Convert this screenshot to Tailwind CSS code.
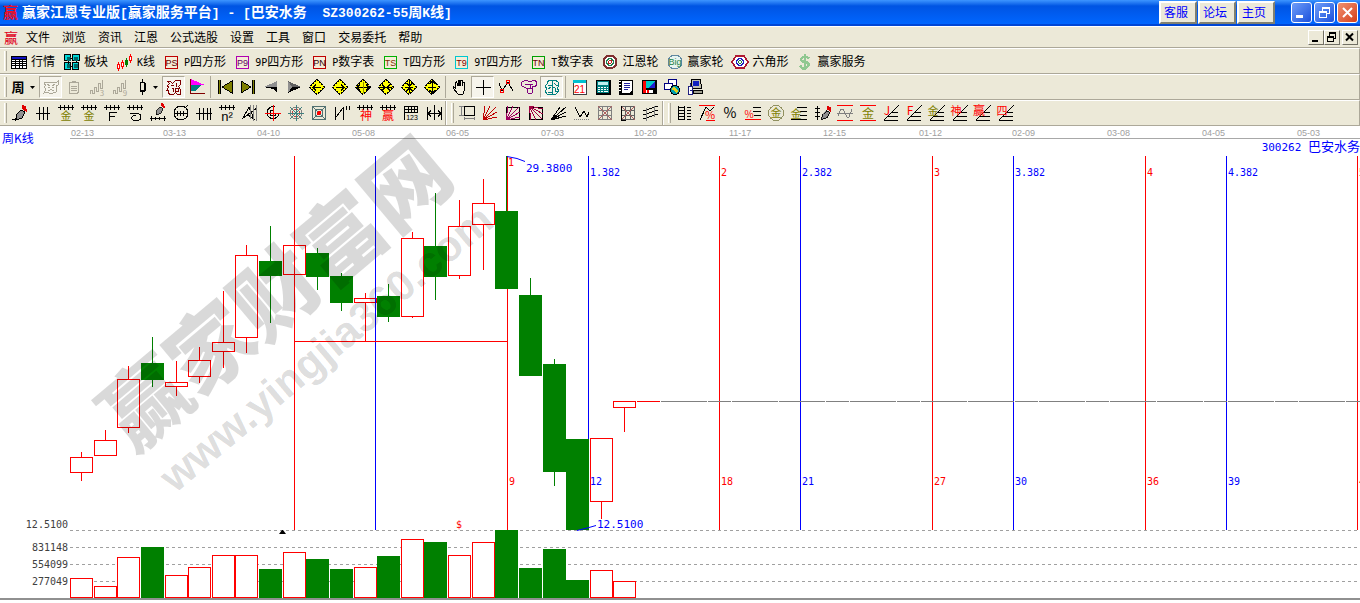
<!DOCTYPE html>
<html lang="zh-CN">
<head>
  <meta charset="UTF-8" />
  <meta name="viewport" content="width=device-width, initial-scale=1.0"/>
  <title>赢家江恩专业版</title>
  <script src="https://cdn.jsdelivr.net/npm/@tailwindcss/browser@4"></script>
</head>

<body class="bg-white font-['Noto_Sans_CJK_SC',sans-serif] text-xs text-black">

  <!-- Title bar -->
  <header class="flex h-[26px] items-center bg-linear-to-b from-[#3d95ff] via-[#0054e3] via-25% to-[#0066ff] border-b-2 border-[#0046d5] pl-[3px] pr-[2px]">
    <span class="w-4 text-[15px] leading-6 font-bold text-[#e8102a]">赢</span>
    <h1 class="ml-[3px] grow whitespace-pre text-sm leading-6 font-bold text-white">赢家江恩专业版<span class="font-['Liberation_Mono',monospace] text-[13px]">[</span>赢家服务平台<span class="font-['Liberation_Mono',monospace] text-[13px]">] - [</span>巴安水务<span class="font-['Liberation_Mono',monospace] text-[13px]">  SZ300262-55</span>周<span class="font-['Liberation_Mono',monospace] text-[13px]">K</span>线<span class="font-['Liberation_Mono',monospace] text-[13px]">]</span></h1>
    <nav class="mr-4 flex gap-px text-[#0000ff]">
      <a href="#" class="h-[23px] w-[38px] border-2 border-t-white border-l-white border-r-[#808070] border-b-[#808070] bg-[#ece9d8] pl-[3px] leading-[17px]">客服</a>
      <a href="#" class="h-[23px] w-[38px] border-2 border-t-white border-l-white border-r-[#808070] border-b-[#808070] bg-[#ece9d8] pl-[3px] leading-[17px]">论坛</a>
      <a href="#" class="h-[23px] w-[38px] border-2 border-t-white border-l-white border-r-[#808070] border-b-[#808070] bg-[#ece9d8] pl-[3px] leading-[17px]">主页</a>
    </nav>
    <div class="flex gap-[2px]">
      <button aria-label="最小化" class="h-[21px] w-[21px] rounded-[3px] border border-white bg-linear-to-br from-[#6f9cf8] to-[#1c4fdc]"><svg class="h-[19px] w-[19px]" viewBox="0 0 19 19"><path d="M4 12h7v3H4z" fill="#fff"/></svg></button>
      <button aria-label="还原" class="h-[21px] w-[21px] rounded-[3px] border border-white bg-linear-to-br from-[#6f9cf8] to-[#1c4fdc]"><svg class="h-[19px] w-[19px]" viewBox="0 0 19 19" shape-rendering="crispEdges"><path d="M4.500 8.500h7v6h-7zM7.500 8V4.500h7v6H12M4 9.500h8M7 5.500h8" fill="none" stroke="#fff"/></svg></button>
      <button aria-label="关闭" class="h-[21px] w-[21px] rounded-[3px] border border-white bg-linear-to-br from-[#f0906e] to-[#d43c14]"><svg class="h-[19px] w-[19px]" viewBox="0 0 19 19"><path d="M5 5l9 9M14 5l-9 9" stroke="#fff" stroke-width="2"/></svg></button>
    </div>
  </header>

  <!-- Menu bar -->
  <div class="flex h-[22px] items-center border-t border-b border-t-white border-b-[#aca899] bg-[#ece9d8] pr-[2px]">
    <span class="ml-1 w-4 text-sm leading-5 text-[#e00020]">赢</span>
    <nav id="menu" class="flex grow"></nav>
    <div class="flex">
      <button aria-label="最小化窗口" class="h-[15px] w-4 border border-t-white border-l-white border-r-[#716f64] border-b-[#716f64]"><svg class="h-[13px] w-[14px]" viewBox="0 0 14 13"><path d="M3 9h6v2H3z"/></svg></button>
      <button aria-label="还原窗口" class="h-[15px] w-4 border border-t-white border-l-white border-r-[#716f64] border-b-[#716f64]"><svg class="h-[13px] w-[14px]" viewBox="0 0 14 13" shape-rendering="crispEdges"><path d="M2.500 6.500h6v4h-6zM2 5.500h7M4.500 5V2.500h6v5H9M4 1.500h7" fill="none" stroke="#000"/></svg></button>
      <button aria-label="关闭窗口" class="ml-[2px] h-[15px] w-4 border border-t-white border-l-white border-r-[#716f64] border-b-[#716f64]"><svg class="h-[13px] w-[14px]" viewBox="0 0 14 13"><path d="M3 2.500l7 7M10 2.500l-7 7" stroke="#000" stroke-width="2"/></svg></button>
    </div>
  </div>

  <!-- Toolbars -->
  <div class="flex h-[26px] items-center border-t border-r border-b border-t-white border-r-[#aca899] border-b-[#aca899] bg-[#ece9d8] pl-1">
    <i class="mr-1 h-5 w-[3px] border-l border-r border-l-white border-r-[#aca899]"></i>
    <div id="views" class="flex gap-[9px]"></div>
  </div>
  <div class="flex h-[26px] items-center border-t border-r border-b border-t-white border-r-[#aca899] border-b-[#aca899] bg-[#ece9d8] pl-1">
    <i class="mr-px h-5 w-[3px] border-l border-r border-l-white border-r-[#aca899]"></i>
    <div id="controls" class="flex items-center"></div>
  </div>
  <div id="drawing" class="flex h-[26px] items-stretch border-t border-r border-b border-t-white border-r-[#aca899] border-b-[#aca899] bg-[#ece9d8]"></div>

  <!-- Chart -->
  <main>
    <svg id="chart" class="w-full" viewBox="0 126 1360 477" role="img" aria-label="巴安水务 周K线"></svg>
  </main>

  <script>
    // ===== helpers =====
    const line = (d, c = '#000', w = 1) => `<path d="${d}" fill="none" stroke="${c}" stroke-width="${w}"/>`;
    const fill = (d, c = '#000') => `<path d="${d}" fill="${c}"/>`;
    const circle = (x, y, r, c, f = 'none', w = 1) => `<circle cx="${x}" cy="${y}" r="${r}" stroke="${c}" stroke-width="${w}" fill="${f}"/>`;
    const glyph = (t, x, y, s, c) => `<text x="${x}" y="${y}" font-size="${s}" fill="${c}" text-anchor="middle">${t}</text>`;
    const icon = (body) => `<svg class="h-4 w-4 shrink-0 overflow-visible" viewBox="0 0 16 16" shape-rendering="crispEdges">${body}</svg>`;

    // ===== menu =====
    document.getElementById('menu').innerHTML =
      ['文件', '浏览', '资讯', '江恩', '公式选股', '设置', '工具', '窗口', '交易委托', '帮助']
        .map(t => `<button class="px-[6px] leading-5">${t}</button>`).join('');

    // ===== first toolbar =====
    const boxed = (t, c, tc) => `<rect x="1.500" y="2.500" width="12" height="12" fill="#f4ecd8" stroke="${c}"/>`
      + `<text x="7.500" y="12" font-size="9" fill="${tc}" text-anchor="middle" font-family="Liberation Sans">${t}</text>`;
    const candleMini = (x, y, c, f) => line(`M${x + 0.5} ${y - 2}v9`, c) + `<rect x="${x - 0.5}" y="${y + 0.5}" width="2" height="4" fill="${f}" stroke="${c}"/>`;
    const views = [
      ['', '行情', fill('M0 2h16v13H0z', '#000') + fill('M1 3h14v2H1z', '#1010c0') + fill('M1 6h3v1H1zM5 6h3v1H5zM9 6h2v1H9zM12 6h3v1h-3zM1 8h3v1H1zM5 8h3v1H5zM9 8h2v1H9zM12 8h3v1h-3zM1 10h3v1H1zM5 10h3v1H5zM9 10h2v1H9zM12 10h3v1h-3zM1 12h3v2H1zM5 12h3v2H5zM9 12h2v2H9zM12 12h3v2h-3z', '#fff')],
      ['', '板块', fill('M0 0h7v7H0zM8 0h8v7H8zM0 8h7v8H0zM8 8h7v8H8z', '#000') + fill('M1 1h5v5H1zM9 1h6v5H9zM1 9h5v6H1zM9 9h5v6H9z', '#00d8d8') + fill('M3 3h4v4H3zM10 3h4v4h-4zM3 10h3v4H3zM10 10h4v4h-4z', '#006868') + line('M6 4.500h3M4.500 7v3M12.500 7v2M6 12.500h3', '#000')],
      ['K', '线', candleMini(1, 10, '#f00', '#fff') + candleMini(5, 8, '#f00', '#fff') + candleMini(9, 6, '#008000', '#008000') + candleMini(13, 2, '#f00', '#fff')],
      ['P', '四方形', boxed('PS', '#c00000', '#600000')],
      ['9P', '四方形', boxed('P9', '#b000b0', '#600060')],
      ['P', '数字表', boxed('PN', '#c00000', '#300000')],
      ['T', '四方形', boxed('TS', '#00b000', '#803000')],
      ['9T', '四方形', boxed('T9', '#00c8d0', '#800000')],
      ['T', '数字表', boxed('TN', '#00a000', '#700000')],
      ['', '江恩轮', circle(8, 8, 6.5, '#803030', '#fff', 2) + circle(8, 8, 3.5, '#208050', 'none', 1.5) + circle(8, 8, 1.5, '#c02020')],
      ['', '赢家轮', circle(8, 8, 7, '#6088a0', '#e8f4f0') + `<text x="8" y="11" font-size="9" fill="#208040" text-anchor="middle" font-family="Liberation Sans">Big</text>`],
      ['', '六角形', `<path d="M4 2h8l4 6-4 6H4L0 8z" fill="#fff" stroke="#b01830" stroke-width="1.500"/>` + circle(8, 8, 3.5, '#2020c0', 'none', 1.5) + circle(8, 8, 1.2, '#208040')],
      ['', '赢家服务', line('M12 4.500Q8 1 5 4T8 8t2 5T3 11.500M8 0v16', '#90c890', 2.5)],
    ];
    document.getElementById('views').innerHTML = views.map(([latin, text, svg]) =>
      `<button class="flex items-center gap-1 pt-px leading-5">${icon(svg)}<span><span class="font-['DejaVu_Sans_Mono',monospace] text-[10px]">${latin}</span>${text}</span></button>`).join('');

    // ===== second toolbar =====
    const g = '#aca899';
    const face = (c) => line('M1 3l4 1 3-1h3l2 1 2-2v4l-2 1 1 2-1 4-3 1H6l-3-1-2 1 2-4-2-2 2-2-2-1zM4 5l3 2M9 7l3-2M5 8h2M9 8h2M5 11h2l1-1 1 1h2', c);
    const wave = (n) => line('M1.500 15v-4h2v3h2V8h2v4h2V4h2v5h2V1', g) + glyph(n, 13, 17, 8, g);
    const diamond = (a) => `<path d="M8 0.500L15.500 8 8 15.500 0.500 8z" fill="#ffff00" stroke="#000" stroke-dasharray="2 1"/>` + line(a);
    const skipBar = fill('M1 1h3v14H1z', '#000') + fill('M2 1h1v14H2z', '#808000');
    const controls = [
      ['drop', '周期', `<text x="6" y="13" font-size="13" font-weight="bold" text-anchor="middle">周</text>`],
      ['on', '形态', face(g)],
      ['', '剪贴板', line('M3.500 3.500h9v10l-2 1h-7zM6 2.500h4M5 7.500h6M5 9.500h6M5 11.500h6', g)],
      ['', '三浪', wave('3')],
      ['', '九浪', wave('9')],
      ['drop', '线型', line('M5.500 3.500h4v8h-4zM7.500 0v3M7.500 12v4M10.500 4v8M5 12.500h5')],
      ['on', '拼图', line('M1.500 2.500h3l2 2 3-3h5v4l-2 2 2 3v5h-3l-2-2-2 2H4.500l-2-1v-3h-2l2-3-1-2 2-2zM5 6.500h3M10.500 4v4M6 9l2 1-1 3M9.500 9.500h3v3h-3z', '#800000')],
      ['', '旗形', fill('M2 0l14 6H2z', '#ff00ff') + fill('M2 6h11l-7 6H2z', '#008080') + line('M1.500 0v14.500H16', '#800000')],
      ['sep'],
      ['', '最前', skipBar + `<path d="M15 2v12L5 8z" fill="#808000" stroke="#000"/>`],
      ['', '最后', `<g transform="translate(16 0) scale(-1 1)">${skipBar}<path d="M15 2v12L5 8z" fill="#808000" stroke="#000"/></g>`],
      ['', '后退', fill('M14 2v6H1z', '#909090') + fill('M14 14V8H1l9 2z', '#000')],
      ['', '前进', fill('M2 2v12l4-6z', '#909090') + fill('M2 2l13 6H6z', '#606060') + fill('M15 8L2 14l4-6z', '#000')],
      ['', '左移', diamond('M4 8.500h8M7 5.500L4 8.500l3 3')],
      ['', '右移', diamond('M4 8.500h8M9 5.500l3 3-3 3')],
      ['', '横向放大', diamond('M2 8.500h12M5 5.500l-3 3 3 3M11 5.500l3 3-3 3') + line('M8.500 3v11', '#909000')],
      ['', '横向缩小', diamond('M2 8.500h12M4 5.500l3 3-3 3M12 5.500l-3 3 3 3')],
      ['', '纵向缩小', diamond('M8.500 2v12M5.500 4l3 3 3-3M5.500 12l3-3 3 3M4 8.500h8')],
      ['', '纵向放大', diamond('M8.500 2v12M5.500 5l3-3 3 3M5.500 11l3 3 3-3M4 8.500h8')],
      ['sep'],
      ['', '拖动', `<path d="M6 15L1.500 9.500V8l2 1V3.500l1-1L6 7V1.500h1.500L8 7l1-5.500h1V7l1.500-4h1v7L11 15z" fill="#f4f0e0" stroke="#000"/>`],
      ['on', '十字线', line('M8.500 1v15M1 8.500h15')],
      ['', '折线', line('M1 4l3 8L10 3l5 9') + circle(4, 12, 2, '#f00') + circle(10, 3, 2, '#f00')],
      ['', '文字', line('M3.500 1.500h3l1 1h3l1-1h3l1 2v3l-2 1h-2v6l-1 1h-3l-1-1v-4l-3-1-3-2v-3zM4 5.500h8M7 9.500h4M9.500 5v5', '#800080')],
      ['on', '脑图', line('M3 3l3-2h2v14H3l-2-3 2-2-2-3 2-2zM8 1h3l3 2 1 4-2 2 2 3-3 3H8M4 6h4M4 10l3-2M4 13h4M10 4l2 2h3M9 8l2 1v3l3 1', '#008080')],
      ['sep'],
      ['', '日历', fill('M1 1h14v15H1z', '#404040') + fill('M2 2h12v13H2z', '#fff') + fill('M1 1h13v3H1z', '#00c0d0') + `<text x="7.500" y="14" font-size="10" fill="#f00" text-anchor="middle" font-family="Liberation Sans">21</text>`],
      ['', '计算器', fill('M1 1h15v15H1z') + fill('M2 2h12v12H2z', '#008080') + fill('M3 3h10v3H3z', '#c0f0f0') + fill('M3 8h2v1H3zM6 8h2v1H6zM9 8h2v1H9zM12 8h1v1h-1zM3 10h2v1H3zM6 10h2v1H6zM9 10h2v1H9zM12 10h1v1h-1zM3 12h2v1H3zM6 12h2v1H6zM9 12h4v1H9z', '#fff')],
      ['', '记事本', fill('M1 1h14v15H1z') + fill('M4 2h10v9l-3 3H4z', '#fff') + line('M6 4.500h6M6 6.500h6M6 8.500h6M6 10.500h4', '#2020a0') + fill('M1 2h2v1H1zM1 5h2v1H1zM1 8h2v1H1zM1 11h2v1H1z', '#fff')],
      ['', '保存', fill('M1 1h15v14H1z') + fill('M2 2h3v12H2z', '#f00') + fill('M5 2h9v7H5z', '#00c8c8') + fill('M14 2v7H7z', '#2020d0') + fill('M5 11h7v3H5z', '#fff') + fill('M6 11h2v3H6z', '#f00')],
      ['', '网络', `<rect x="4.500" y="0.500" width="8" height="6" fill="#fff" stroke="#000080"/><rect x="0.500" y="4.500" width="8" height="6" fill="#fff" stroke="#000080"/>` + circle(11, 11, 4.5, '#000', '#00a0b0') + fill('M9 8l3 1 2 3-2 2-1-2-3-1z', '#e0d020')],
      ['', '电脑', `<path d="M4.500 0.500h9l1 9h-10z" fill="#c0c0b0" stroke="#000"/>` + fill('M6 2h6v5H6z', '#1020c0') + `<path d="M6 11.500h9.500v3H6z" fill="#a0a090" stroke="#000"/><path d="M1.500 7.500h4v8h-4z" fill="#fff" stroke="#202080"/>` + line('M3.500 4v3M3 11.500h2', '#202080')],
    ];
    document.getElementById('controls').innerHTML = controls.map(([kind, label, svg]) => {
      if (kind === 'sep') return `<i class="mx-[2px] h-[22px] w-px bg-[#aca899]"></i>`;
      if (kind === 'drop') return `<button aria-label="${label}" class="flex h-[22px] w-[31px] items-center gap-[2px] pl-1">${icon(svg)}<svg class="h-[3px] w-[5px]" viewBox="0 0 5 3"><path d="M0 0h5L2.500 3z"/></svg></button>`;
      if (kind === 'on') return `<button aria-label="${label}" aria-pressed="true" class="flex h-[22px] w-[23px] items-center justify-center border border-t-[#aca899] border-l-[#aca899] border-r-white border-b-white bg-[#f6f4ec]">${icon(svg)}</button>`;
      return `<button aria-label="${label}" class="flex h-[22px] w-[23px] items-center justify-center">${icon(svg)}</button>`;
    }).join('');

    // ===== drawing toolbar =====
    const ruler = 'M0 2.500h16M2.500 0v5M6.500 0v5M10.500 0v5M14.500 0v5';
    const pen = `<path d="M9 5l4 2-3 6-6 2 1-6z" fill="#909090" stroke="#000"/>` + fill('M10 0l4 1 1 6-5-3z', '#e00000');
    const fan = (c) => line('M1 15L3 1M1 15L8 1M1 15L14 2M1 15L15 7M1 15L15 12', c);
    const grid = (c) => line('M1.500 1.500h13v13h-13zM5.500 1v14M10.500 1v14M1 5.500h14M1 10.500h14', c);
    const slope = line('M1 15L16 0M5 11.500h10M9 7.500h6M1 15.500h14');
    const lettered = (t, c, s = 11) => slope + glyph(t, 4, 10, s, c);
    const groups = [
      [
        ['画笔', pen + line('M0 14l2 1 3-2')],
        ['等距线', line('M1 8.500h14M4.500 2v13M8.500 2v13M12.500 2v13')],
        ['黄金尺', line(ruler) + glyph('金', 8, 15, 11, '#808000')],
        ['黄金线', line(ruler) + glyph('金', 8, 15, 11, '#808000')],
        ['斐波那契', line(ruler) + line('M5.500 16V7.500h7M5 11.500h6')],
        ['螺旋', line(ruler) + line('M3 8.500h7q4 0 4 3.500t-5 3.500-4-3.500q1-2 4-1')],
        ['标尺笔', `<g transform="translate(3 -2) scale(.8)">${pen}</g>` + line('M0 13.500h16M1.500 11v5M5.500 12v3M9.500 12v3M14.500 11v5')],
        ['周期圆', circle(8, 8, 7, '#000') + line('M1 8.500h14M4.500 6v5M7.500 6v5M10.500 6v5M12 3l3-3')],
        ['等分线', line('M0 8.500h16M3.500 3v12M7.500 3v12M11.500 3v12M14.500 3v12')],
        ['平方线', line(ruler) + `<text x="8" y="16" font-size="13" text-anchor="middle" font-family="Liberation Sans">n²</text>`],
        ['三角线', line('M1 13L7 2l5 12-6-4zM1 13l14-10') + line('M11.500 0v16M14.500 0v16M8.500 0v14', '#808080')],
        ['圆弧十字', line('M14 8a6 6 0 1 1-4-6M11 8a3 3 0 1 1-3-3') + line('M0 8.500h16M8.500 0v16', '#f00')],
        ['极坐标', circle(8, 8, 6, '#808080') + circle(8, 8, 3.5, '#c04040') + line('M8 0v16M0 8h16M2 2l12 12M14 2L2 14', '#408080')],
        ['方图', line('M1.500 1.500h13v13h-13zM4.500 4.500h7v7h-7zM1 1l14 14M15 1L1 15', '#507070') + circle(8, 8, 1.5, '#f00', '#f00')],
        ['波段', line('M1.500 2v13M2 12L9 3M9.500 2v13M12.500 1v4M15.500 1v4')],
        ['神尺', line(ruler) + glyph('神', 9, 15, 12, '#f00')],
        ['赢尺', line(ruler) + glyph('赢', 8, 15, 12, '#f00')],
        ['数尺', line('M1 1.500h14M1 7.500h14M1.500 1v14M5.500 1v6M8.500 1v6M11.500 1v6M14.500 1v6M1 4.500h14') + `<text x="9" y="15" font-size="7" text-anchor="middle" font-family="Liberation Sans">123</text>`],
        ['区间', line('M1.500 2v13M15.500 2v13M8.500 0v15M2 8.500h13M5 5.500l-3 3 3 3M12 5.500l3 3-3 3')],
      ],
      [
        ['矩形', line('M5.500 1.500h10v9h-10z', '#000') + line('M2.500 1v10M0 1.500h5M0 10.500h5M5.500 13.500h10M5.500 12v3M15.500 12v3', '#808080')],
        ['扇形', fan('#c00000')],
        ['方扇形', line('M1.500 2.500h13v12h-13z') + fan('#a00060')],
        ['反扇形', line('M1.500 2.500h13v12h-13z') + `<g transform="translate(0 16) scale(1 -1)">${fan('#a00040')}</g>`],
        ['角度线', line('M0 15L15 2M0 15L15 7M0 15L15 11M0 15L9 2')],
        ['折点', line('M1 2l5 10 4-6 3 6 2-5') + `<path d="M0 14.500h15" stroke="#808080" stroke-dasharray="1 1"/>`],
        ['网格', grid('#808080') + line('M1 1l14 14M15 1L1 15', '#b06060')],
        ['网格线', grid('#606060') + line('M1 1l14 14M15 1L1 15', '#b06060') + line('M1.500 1v14h4')],
        ['平行线', line('M0 6l15-5M0 10l15-5M0 14l15-5') + line('M3.500 3v13M11.500 1v11', '#808080')],
      ],
      [
        ['刻度', line('M2.500 1v14M8.500 1v14M2 2.500h6M2 5.500h6M2 8.500h6M2 11.500h6M2 14.500h6M11 2.500h4M11 5.500h4M11 8.500h4M11 11.500h4M11 14.500h4')],
        ['百分比线', line('M0 0.500h16M7 15.500h9', '#f00') + line('M1 15L7 2l4 4 4-4') + glyph('%', 11, 14, 11, '#f00')],
        ['百分比', glyph('%', 8, 13, 14, '#000')],
        ['百分比尺', line('M8 2.500h8M8 6.500h8M9 10.500h7') + line('M0 14.500h16', '#f00') + glyph('%', 4, 13, 10, '#f00')],
        ['金圆', circle(8, 8, 7.5, '#909060') + glyph('金', 8, 12, 11, '#808000')],
        ['金线', line('M6 2.500h10M9 6.500h7M9 10.500h7M0 14.500h16') + glyph('金', 5, 13, 11, '#808000')],
        ['标笔', line('M3.500 1v14M1 3.500h5M1 7.500h5M1 11.500h5') + `<g transform="translate(4 1) scale(.9)">${pen}</g>`],
        ['波浪', line('M0 0.500h16M0 15.500h16', '#f00') + line('M0 8.500h16M1 11l3-7h2l4 8h2l3-8', '#808080')],
        ['金区', line('M0 0.500h16M0 15.500h16', '#f00') + glyph('金', 8, 13, 12, '#808000')],
        ['江恩', lettered('J', '#f00', 12)],
        ['斐波', lettered('F', '#f00', 12)],
        ['金', lettered('金', '#808000')],
        ['神', lettered('神', '#f00')],
        ['赢', lettered('赢', '#f00', 12)],
        ['四', lettered('四', '#f00')],
      ],
    ];
    document.getElementById('drawing').innerHTML = groups.map(tools =>
      `<div class="flex items-center border-r border-r-[#aca899] pl-1 last:border-r-0 not-first:border-l not-first:border-l-white">
        <i class="mr-px h-5 w-[3px] border-l border-r border-l-white border-r-[#aca899]"></i>
        ${tools.map(([label, svg]) => `<button aria-label="${label}" class="flex h-[22px] w-[23px] items-center justify-center">${icon(svg)}</button>`).join('')}
      </div>`).join('');

    // ===== chart =====
    const RED = '#ff0000', GREEN = '#008000', BLUE = '#0000ff';
    // x, up, body top, body bottom, high, low, volume top
    const candles = [
      [70, 1, 457, 473, 452, 481, 578], [94, 1, 440, 456, 430, 456, 586], [117, 1, 379, 428, 366, 433, 557],
      [141, 0, 363, 380, 337, 387, 547], [165, 1, 382, 387, 361, 396, 575], [188, 1, 360, 377, 347, 383, 567],
      [212, 1, 342, 352, 291, 368, 555], [235, 1, 255, 338, 245, 353, 555], [259, 0, 261, 276, 226, 323, 569],
      [283, 1, 245, 275, 245, 275, 552], [306, 0, 253, 277, 248, 290, 559], [330, 0, 276, 303, 273, 311, 569],
      [354, 1, 298, 303, 293, 341, 567], [377, 0, 296, 317, 284, 322, 556], [401, 1, 238, 317, 232, 318, 539],
      [424, 0, 246, 277, 193, 300, 542], [448, 1, 226, 276, 200, 279, 555], [472, 1, 203, 225, 179, 270, 542],
      [495, 0, 211, 289, 156, 289, 530], [519, 0, 295, 376, 278, 376, 568], [543, 0, 364, 472, 359, 486, 549],
      [566, 0, 439, 530, 439, 530, 580], [590, 1, 438, 502, 438, 519, 570], [613, 1, 401, 408, 401, 432, 581],
    ];
    // x, colour, ratio label, week label
    const cycles = [
      [294, RED, '', ''], [375, BLUE, '', ''], [507, RED, '', '9'], [588, BLUE, '1.382', '12'],
      [719, RED, '2', '18'], [800, BLUE, '2.382', '21'], [932, RED, '3', '27'], [1013, BLUE, '3.382', '30'],
      [1145, RED, '4', '36'], [1226, BLUE, '4.382', '39'], [1357, RED, '5', '45'],
    ];
    const dates = [[71, '02-13'], [163, '03-13'], [257, '04-10'], [352, '05-08'], [446, '06-05'], [541, '07-03'], [634, '10-20'],
      [729, '11-17'], [823, '12-15'], [919, '01-12'], [1012, '02-09'], [1107, '03-08'], [1202, '04-05'], [1297, '05-03']];
    const num = (x, y, t, c, anchor = 'start') =>
      `<text class="font-['DejaVu_Sans_Mono',monospace] text-[10px]" x="${x}" y="${y}" fill="${c}" text-anchor="${anchor}">${t}</text>`;
    const box = (x, up, top, bottom) => up
      ? `<rect x="${x + 0.5}" y="${top + 0.5}" width="22" height="${bottom - top - 1}" fill="none" stroke="${RED}"/>`
      : `<rect x="${x}" y="${top}" width="23" height="${bottom - top}" fill="${GREEN}"/>`;

    let out = '';
    dates.forEach(([x, t]) => out += `<text class="font-['Liberation_Sans',sans-serif] text-[9px]" x="${x}" y="136" fill="#a0a0a0">${t}</text>`);
    out += line('M70 138.500H1360', '#a8a8a8');
    [530, 547, 564, 581].forEach(y => out += `<path d="M70 ${y + 0.5}H1358" stroke="#a0a0a0" stroke-dasharray="3 3"/>`);
    candles.forEach(([x, up, top, bottom, high, low, vol]) => {
      const c = up ? RED : GREEN;
      out += line(`M${x + 11.5} ${high}V${top}M${x + 11.5} ${bottom}V${low}`, c) + box(x, up, top, bottom);
      // volume bar, opaque so the guide lines stay behind it
      if (up) out += `<rect x="${x}" y="${vol}" width="23" height="${598 - vol}" fill="#fff"/>`;
      out += box(x, up, vol, 598);
    });
    cycles.forEach(([x, c, ratio, week]) => {
      const path = x === 507 ? `M${x}.5 156V211M${x}.5 289V530` : x === 588 ? `M${x}.5 156V439` : `M${x}.5 156V530`;
      out += line(path, c) + num(x + 2, 176, ratio, c) + num(x + 2, 485, week, c);
    });
    out += line('M294 341.500H508', RED) + line('M637 401.500H660', RED);
    out += `<path d="M661 401.500H1360" stroke="#808080" stroke-dasharray="46 1 23 1 46 1 46 1 23 1"/>`;
    out += num(508, 166, '1', RED) + num(456, 528, '$', RED);
    out += line('M507 156.500l10 2 8 3', BLUE) + line('M577 530.500l12-3 7-2', BLUE);
    out += `<text class="font-['DejaVu_Sans_Mono',monospace] text-[11px]" x="526" y="172" fill="${BLUE}">29.3800</text>`;
    out += `<text class="font-['DejaVu_Sans_Mono',monospace] text-[11px]" x="597" y="528" fill="${BLUE}">12.5100</text>`;
    out += fill('M279 534h7l-3-4h-1z');
    [[528, '12.5100'], [551, '831148'], [568, '554099'], [585, '277049']].forEach(([y, t]) => out += num(68, y, t, '#404040', 'end'));
    out += `<text class="text-xs" x="2" y="143" fill="${BLUE}">周K线</text>`;
    out += `<text class="text-[13px]" x="1360" y="151" fill="${BLUE}" text-anchor="end"><tspan class="font-['DejaVu_Sans_Mono',monospace] text-[11px]">300262 </tspan>巴安水务</text>`;
    out += `<rect x="0" y="598" width="1360" height="2" fill="#909090"/>`;
    out += `<g fill="#000" fill-opacity=".15"><text class="text-[85px] font-black" transform="translate(133 454) rotate(-40)">赢家财富网</text>`
      + `<text class="font-['Liberation_Sans',sans-serif] text-[43px] font-bold" transform="translate(175 494) rotate(-40)">www.yingjia360.com</text></g>`;
    document.getElementById('chart').innerHTML = out;
  </script>

</body>
</html>
